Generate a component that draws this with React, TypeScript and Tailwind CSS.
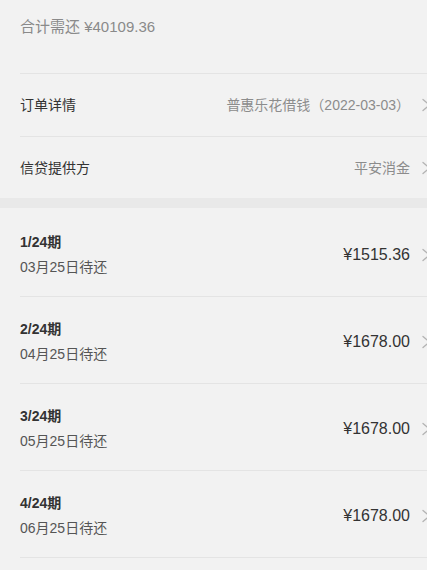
import React from 'react';

const font = { fontFamily: '"Liberation Sans", "Noto Sans CJK SC", sans-serif' };

interface Installment {
  period: string;
  due: string;
  amount: string;
}

const installments: Installment[] = [
  { period: '1/24期', due: '03月25日待还', amount: '¥1515.36' },
  { period: '2/24期', due: '04月25日待还', amount: '¥1678.00' },
  { period: '3/24期', due: '05月25日待还', amount: '¥1678.00' },
  { period: '4/24期', due: '06月25日待还', amount: '¥1678.00' },
];

// Chevron is partly cut off by the right edge in the screenshot
function Chevron() {
  return (
    <svg
      viewBox="0 0 12 14"
      className="w-[12px] h-[14px] ml-[11px] -mr-[6px] shrink-0"
      fill="none"
      stroke="#b3b3b3"
      strokeWidth="1.3"
      strokeLinecap="round"
      strokeLinejoin="round"
    >
      <path d="M2 1.5 L8.5 7 L2 12.5" />
    </svg>
  );
}

function InfoRow({ label, value, height, bordered }: { label: string; value: string; height: string; bordered?: boolean }) {
  return (
    <div className={`flex items-center justify-between ${height} ${bordered ? 'border-b border-[#e4e4e4]' : ''}`}>
      <span className="text-[14px] text-[#333333] leading-[20px]">{label}</span>
      <div className="flex items-center">
        <span className="text-[14px] text-[#8c8c8c] leading-[20px]">{value}</span>
        <Chevron />
      </div>
    </div>
  );
}

export default function App() {
  return (
    <div className="w-[427px] h-[570px] overflow-hidden bg-[#f2f2f2]" style={font}>
      {/* Summary and order info */}
      <div className="pl-5 pt-[15px]">
        <div className="h-[59px] border-b border-[#e4e4e4]">
          <span className="text-[15px] leading-[20px] text-[#8a8a8a]">合计需还 ¥40109.36</span>
        </div>
        <InfoRow label="订单详情" value="普惠乐花借钱（2022-03-03）" height="h-[63px]" bordered />
        <InfoRow label="信贷提供方" value="平安消金" height="h-[61px]" />
      </div>

      <div className="h-[10px] bg-[#e9e9e9]" />

      {/* Installments */}
      <div className="pl-5">
        {installments.map((item, i) => (
          <div
            key={item.period}
            className={`flex items-center justify-between ${i === 0 ? 'pt-[24px]' : 'pt-[22px]'} pb-[19px] border-b border-[#e4e4e4]`}
          >
            <div className="flex flex-col">
              <span className="text-[14px] leading-[20px] font-bold text-[#333333]">{item.period}</span>
              <span className="text-[14px] leading-[20px] mt-[5px] text-[#555555]">{item.due}</span>
            </div>
            <div className="flex items-center">
              <span className="text-[16px] leading-[20px] text-[#333333]">{item.amount}</span>
              <Chevron />
            </div>
          </div>
        ))}
      </div>
    </div>
  );
}
